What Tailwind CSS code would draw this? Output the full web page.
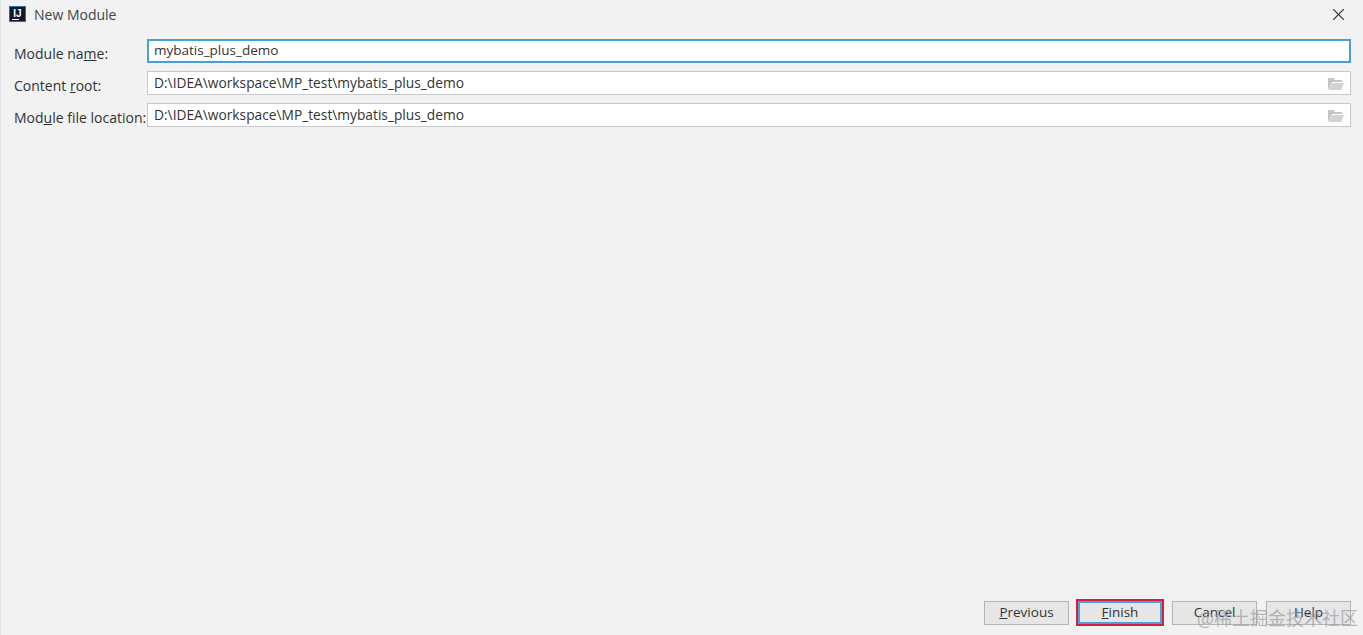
<!DOCTYPE html>
<html lang="en">
<head>
  <meta charset="UTF-8">
  <title>New Module</title>
  <script src="https://cdn.jsdelivr.net/npm/@tailwindcss/browser@4"></script>
</head>
<body class="bg-[#f2f2f2] text-[#333] font-['Open_Sans','Noto_Sans',sans-serif] text-[14px] overflow-hidden">

<div class="relative flex flex-col h-[635px] w-[1363px] border-l border-l-[#e4e4e4]">

  <!-- title bar -->
  <div class="flex items-center h-[28px] pl-[8px] pr-[19px] shrink-0">
    <div class="w-[17px] h-[16px] bg-[#10182a] border border-[#2d6fa8] flex flex-col justify-center items-center">
      <span class="font-['Liberation_Sans',sans-serif] font-bold text-[10px] leading-[9px] text-white">IJ</span>
      <span class="w-[7px] h-[1px] bg-white mt-[1px] mr-[4px]"></span>
    </div>
    <span class="ml-[8px] text-[#444]">New Module</span>
    <svg class="ml-auto" width="11" height="11" viewBox="0 0 11 11" fill="none" stroke="#333" stroke-width="1.2"><path d="M0 0l11 11M11 0L0 11"/></svg>
  </div>

  <!-- form -->
  <div class="flex flex-col gap-[8px] pl-[13px] pr-[12px] pt-[11px]">
    <div class="flex h-[24px] gap-[1px]">
      <label class="w-[132px] mt-[3px] leading-[24px]">Module na<u>m</u>e:</label>
      <div class="flex-1 bg-white border-2 border-[#4a9fd8] flex items-center px-[5px] text-[13.5px] leading-none">mybatis_plus_demo</div>
    </div>
    <div class="flex h-[24px] gap-[1px]">
      <label class="w-[132px] mt-[3px] leading-[24px]">Content <u>r</u>oot:</label>
      <div class="flex-1 bg-white border border-[#c8c8c8] flex items-center px-[6px] text-[13.75px]">
        <span>D:\IDEA\workspace\MP_test\mybatis_plus_demo</span>
        <svg class="ml-auto" width="16" height="13" viewBox="0 0 16 13"><path d="M0 1h6l1 2h7v2H4L1 12H0z" fill="#c4c4c4"/><path d="M4 6h12l-3 7H1z" fill="#d2d2d2"/></svg>
      </div>
    </div>
    <div class="flex h-[24px] gap-[1px]">
      <label class="w-[132px] mt-[3px] leading-[24px] whitespace-nowrap">Mod<u>u</u>le file location:</label>
      <div class="flex-1 bg-white border border-[#c8c8c8] flex items-center px-[6px] text-[13.75px]">
        <span>D:\IDEA\workspace\MP_test\mybatis_plus_demo</span>
        <svg class="ml-auto" width="16" height="13" viewBox="0 0 16 13"><path d="M0 1h6l1 2h7v2H4L1 12H0z" fill="#c4c4c4"/><path d="M4 6h12l-3 7H1z" fill="#d2d2d2"/></svg>
      </div>
    </div>
  </div>

  <!-- buttons -->
  <div class="mt-auto flex justify-end items-center pr-[12px] pb-[9px] text-[13.5px]">
    <button class="w-[85px] h-[24px] mr-[7px] bg-[#e6e6e6] border border-[#b4b4b4] leading-none"><u>P</u>revious</button>
    <div class="border-2 border-[#d81e3c] mr-[8px]">
      <button class="block w-[84px] h-[23px] bg-[#e6e6e6] border-2 border-[#4a9fd8] leading-none"><u>F</u>inish</button>
    </div>
    <button class="w-[85px] h-[24px] mr-[9px] bg-[#e6e6e6] border border-[#b4b4b4] leading-none">Cancel</button>
    <button class="w-[85px] h-[24px] bg-[#e6e6e6] border border-[#b4b4b4] leading-none">Help</button>
  </div>

  <!-- watermark -->
  <span class="absolute left-[1196px] top-[605px] text-[18px] leading-[24px] text-[#9a9a9a]/70 whitespace-nowrap font-['Noto_Sans_CJK_SC',sans-serif]">@稀土掘金技术社区</span>
</div>

</body>
</html>
